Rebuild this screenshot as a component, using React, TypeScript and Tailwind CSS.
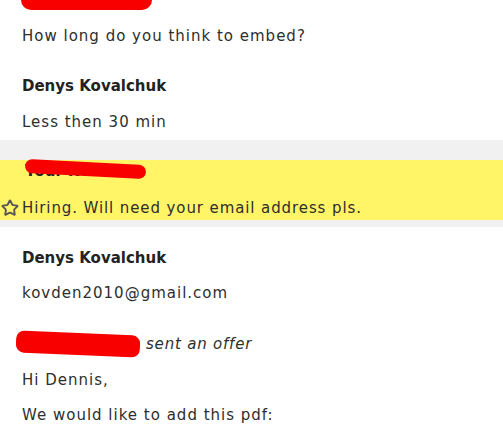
import { Star } from "lucide-react"

const font = { fontFamily: '"DejaVu Sans", "Open Sans", sans-serif' }

function Line({ children, className = "" }: { children: React.ReactNode; className?: string }) {
  return <div className={`h-5 leading-5 text-[15px] tracking-[1px] text-[#2e2e2e] ${className}`}>{children}</div>
}

function Name({ children, className = "" }: { children: React.ReactNode; className?: string }) {
  return <div className={`h-5 leading-5 text-[15px] font-semibold text-[#222] ${className}`}>{children}</div>
}

export default function App() {
  return (
    <div className="w-[503px] h-[428px] overflow-hidden bg-white" style={font}>
      {/* previous message */}
      <div className="px-[22px] pb-2">
        <div className="h-[10px] w-[131px] -ml-px rounded-b-full bg-[#f80000]" />
        <Line className="mt-4">How long do you think to embed?</Line>
        <Name className="mt-[30px]">Denys Kovalchuk</Name>
        <Line className="mt-4">Less then 30 min</Line>
      </div>

      <div className="h-5 bg-[#f1f1f1]" />

      {/* highlighted */}
      <div className="bg-[#fff566] pt-px pb-[2px]">
        <div className="relative ml-[25px]">
          <Name>Your Name</Name>
          <div className="absolute left-0 top-[1px] h-[14px] w-[121px] rotate-[3deg] rounded-full bg-[#f80000]" />
        </div>
        <div className="mt-[17px] flex h-5 items-center gap-[3px] pl-[1px]">
          <Star size={18} strokeWidth={2.5} className="text-[#555]" />
          <span className="text-[15px] leading-5 tracking-[0.9px] text-[#2e2e2e]">Hiring. Will need your email address pls.</span>
        </div>
      </div>

      <div className="h-[7px] bg-[#f1f1f1]" />

      <div className="px-[22px]">
        <Name className="mt-[21px]">Denys Kovalchuk</Name>
        <Line className="mt-[15px]">kovden2010@gmail.com</Line>
        <div className="mt-[31px] flex h-5 items-center -ml-[6px]">
          <div className="h-[22px] w-[124px] rotate-[2.5deg] rounded-[8px] bg-[#f80000]" />
          <span className="ml-[6px] text-[15px] italic leading-5 tracking-[0.8px] text-[#2e2e2e]">sent an offer</span>
        </div>
        <Line className="mt-4">Hi Dennis,</Line>
        <Line className="mt-[15px]">We would like to add this pdf:</Line>
      </div>
    </div>
  )
}
